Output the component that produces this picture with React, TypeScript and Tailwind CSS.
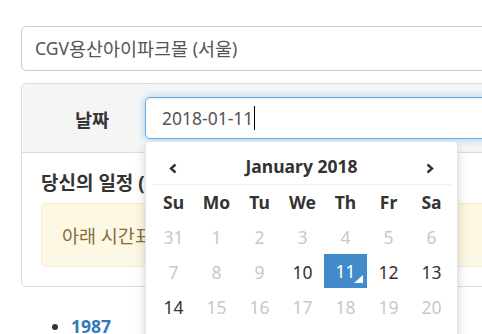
import React from "react";

const weeks: { d: number; on: boolean }[][] = [
  [31, 1, 2, 3, 4, 5, 6].map((d) => ({ d, on: false })),
  [7, 8, 9, 10, 11, 12, 13].map((d) => ({ d, on: d >= 10 })),
  [14, 15, 16, 17, 18, 19, 20].map((d) => ({ d, on: d === 14 })),
  [21, 22, 23, 24, 25, 26, 27].map((d) => ({ d, on: false })),
];

function Chevron({ dir }: { dir: "l" | "r" }) {
  return (
    <svg width="10" height="11" viewBox="0 0 10 11" className="mt-[5px]">
      <path
        d={dir === "l" ? "M7.5 1.5 L3 5.5 L7.5 9.5" : "M2.5 1.5 L7 5.5 L2.5 9.5"}
        fill="none"
        stroke="#333"
        strokeWidth="2.4"
      />
    </svg>
  );
}

export default function App() {
  return (
    <div className="relative w-[482px] h-[334px] overflow-hidden bg-white text-[#333] text-[17.5px] leading-[25px] font-['Noto_Sans','Noto_Sans_CJK_KR',sans-serif]">
      <div className="w-[700px] pl-[21px] pt-[26px]">
        <div className="h-[45px] border border-[#ccc] rounded-[5px] flex items-center pl-[13px] text-[#555]">
          CGV<span className="text-[18.5px]">용산아이파크몰</span>&nbsp;(<span className="text-[18.5px]">서울</span>)
        </div>
        <div className="mt-[12px] border border-[#ddd] rounded-[5px]">
          <div className="h-[69px] bg-[#f5f5f5] border-b border-[#ddd] rounded-t-[5px] flex items-center">
            <div className="w-[87px] text-right font-bold mt-[2px] text-[18.5px]">날짜</div>
            <div className="ml-[36px] flex-1 h-[42px] bg-white border border-[#66afe9] rounded-[5px] shadow-[inset_0_1px_1px_rgba(0,0,0,0.075),0_0_8px_rgba(102,175,233,0.6)] flex items-center pl-[16px] text-[#555]">
              2018-01-11
              <span className="inline-block w-px h-[24px] bg-black ml-px" />
            </div>
          </div>
          <div className="px-[19px] pt-[20px] pb-[19px]">
            <h4 className="font-bold text-[19px] leading-[20px] mb-[10px]">
              당신의 일정 (2018-01-11)
            </h4>
            <div className="h-[64px] bg-[#fcf8e3] border border-[#faebcc] rounded-[5px] flex items-center px-[20px] text-[#8a6d3b] text-[18.5px]">
              아래 시간표에서 영화를 선택하세요.
            </div>
          </div>
        </div>
        <ul className="mt-[27px] pl-[50px] list-disc">
          <li>
            <a className="font-bold text-[#337ab7]">1987</a>
          </li>
        </ul>
      </div>

      <div className="absolute left-[145px] top-[141px] w-[313px] h-[230px] bg-white border border-black/10 rounded-[5px] shadow-[0_6px_12px_rgba(0,0,0,0.175)] px-[6px] pt-[6px]">
        <div className="h-[37px] border-b border-[#eee] flex items-center">
          <div className="w-[43px] flex justify-center">
            <Chevron dir="l" />
          </div>
          <div className="w-[215px] text-center font-bold">January 2018</div>
          <div className="w-[43px] flex justify-center">
            <Chevron dir="r" />
          </div>
        </div>
        <div className="grid grid-cols-[repeat(7,43px)] auto-rows-[35px]">
          {["Su", "Mo", "Tu", "We", "Th", "Fr", "Sa"].map((n) => (
            <div key={n} className="flex items-center justify-center font-bold">
              {n}
            </div>
          ))}
          {weeks.flat().map((c, i) =>
            c.d === 11 && c.on ? (
              <div
                key={i}
                className="relative flex items-center justify-center bg-[#428bca] text-white -mt-px h-[34px]"
              >
                {c.d}
                <span className="absolute right-[4px] bottom-[5px] w-0 h-0 border-solid border-transparent border-b-white border-b-[8px] border-l-[9px]" />
              </div>
            ) : (
              <div
                key={i}
                className={`flex items-center justify-center ${c.on ? "text-[#333]" : "text-[#c8c8c8]"}`}
              >
                {c.d}
              </div>
            )
          )}
        </div>
      </div>
    </div>
  );
}
